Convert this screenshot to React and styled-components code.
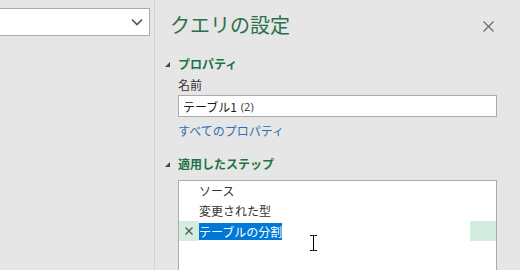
import React from "react";
import styled, { createGlobalStyle } from "styled-components";

const Global = createGlobalStyle`
  html, body { margin: 0; padding: 0; background: #e6e6e6; overflow: hidden; }
  body { font-family: "Noto Sans CJK JP", "Noto Sans", sans-serif; font-size: 12px; color: #262626; }
`;

const Page = styled.div`
  display: flex;
  width: 520px;
  height: 270px;
  background: #e6e6e6;
  overflow: hidden;
`;

const LeftPanel = styled.div`
  width: 154px;
  padding-top: 8px;
  box-sizing: border-box;
`;

const Dropdown = styled.div`
  margin-left: -1px;
  width: 151px;
  height: 28px;
  box-sizing: border-box;
  background: #fff;
  border: 1px solid #ababab;
  display: flex;
  align-items: center;
  justify-content: flex-end;
  padding-right: 6px;
`;

const Divider = styled.div`
  width: 1px;
  background: #d2d2d2;
`;

const RightPanel = styled.div`
  flex: 1;
  display: flex;
  flex-direction: column;
  padding: 0 23px 0 10px;
  position: relative;
`;

const TitleRow = styled.div`
  display: flex;
  align-items: center;
  justify-content: space-between;
  padding: 11px 3px 0 5px;
  height: 28px;
`;

const Title = styled.div`
  font-size: 20px;
  line-height: 28px;
  color: #2b7149;
`;

const CloseButton = styled.div`
  width: 11px;
  height: 11px;
  display: flex;
  margin-top: 2px;
`;

const SectionHeader = styled.div`
  display: flex;
  align-items: center;
  height: 18px;
  margin-top: ${(p) => p.$top}px;
`;

const Caret = styled.div`
  width: 13px;
  display: flex;
  align-items: center;
`;

const SectionTitle = styled.div`
  font-weight: 700;
  font-size: 12px;
  line-height: 18px;
  color: #217346;
`;

const Content = styled.div`
  padding-left: 13px;
  display: flex;
  flex-direction: column;
`;

const Label = styled.div`
  line-height: 18px;
  margin-top: 3px;
  color: #333;
`;

const NameInput = styled.div`
  margin-top: 1px;
  height: 22px;
  box-sizing: border-box;
  border: 1px solid #ababab;
  background: #fff;
  padding-left: 4px;
  display: flex;
  align-items: center;
  color: #1a1a1a;
`;

const Paren = styled.span`
  font-family: "Noto Sans", sans-serif;
  font-size: 11px;
  color: #444;
  margin-left: 1px;
`;

const Link = styled.div`
  line-height: 18px;
  margin-top: 5px;
  color: #2f6db5;
`;

const StepList = styled.div`
  margin-top: 7px;
  height: 120px;
  box-sizing: border-box;
  border: 1px solid #ababab;
  background: #fff;
  display: flex;
  flex-direction: column;
`;

const Step = styled.div`
  height: 20px;
  display: flex;
  align-items: center;
  background: ${(p) => (p.$active ? "#d3ede0" : "transparent")};
`;

const StepIcon = styled.div`
  width: 20px;
  height: 20px;
  display: flex;
  align-items: center;
  justify-content: center;
`;

const StepText = styled.div`
  line-height: 20px;
  color: #333;
`;

const EditBox = styled.div`
  width: 271px;
  height: 20px;
  background: #fff;
  display: flex;
  align-items: center;
`;

const Selected = styled.span`
  background: #0078d7;
  color: #fff;
  line-height: 17px;
  height: 17px;
`;

const Cursor = styled.div`
  position: absolute;
  left: 155px;
  top: 235px;
  width: 7px;
  height: 16px;
`;

export default function App() {
  return (
    <Page>
      <Global />
      <LeftPanel>
        <Dropdown>
          <svg width="12" height="8" viewBox="0 0 12 8">
            <path d="M1 1.5 L6 6.5 L11 1.5" fill="none" stroke="#555" strokeWidth="1.6" />
          </svg>
        </Dropdown>
      </LeftPanel>
      <Divider />
      <RightPanel>
        <TitleRow>
          <Title>クエリの設定</Title>
          <CloseButton>
            <svg width="11" height="11" viewBox="0 0 11 11">
              <path d="M0.5 0.5 L10.5 10.5 M10.5 0.5 L0.5 10.5" stroke="#666" strokeWidth="1.1" />
            </svg>
          </CloseButton>
        </TitleRow>
        <SectionHeader $top={16}>
          <Caret>
            <svg width="5" height="5" viewBox="0 0 5 5">
              <path d="M5 0 L5 5 L0 5 Z" fill="#444" />
            </svg>
          </Caret>
          <SectionTitle>プロパティ</SectionTitle>
        </SectionHeader>
        <Content>
          <Label>名前</Label>
          <NameInput>
            テーブル1<Paren>&nbsp;(2)</Paren>
          </NameInput>
          <Link>すべてのプロパティ</Link>
        </Content>
        <SectionHeader $top={15}>
          <Caret>
            <svg width="5" height="5" viewBox="0 0 5 5">
              <path d="M5 0 L5 5 L0 5 Z" fill="#444" />
            </svg>
          </Caret>
          <SectionTitle>適用したステップ</SectionTitle>
        </SectionHeader>
        <Content>
          <StepList>
            <Step>
              <StepIcon />
              <StepText>ソース</StepText>
            </Step>
            <Step>
              <StepIcon />
              <StepText>変更された型</StepText>
            </Step>
            <Step $active>
              <StepIcon>
                <svg width="8" height="8" viewBox="0 0 8 8">
                  <path d="M0.5 0.5 L7.5 7.5 M7.5 0.5 L0.5 7.5" stroke="#555" strokeWidth="1.3" />
                </svg>
              </StepIcon>
              <EditBox>
                <Selected>テーブルの分割</Selected>
              </EditBox>
            </Step>
          </StepList>
        </Content>
        <Cursor>
          <svg width="7" height="16" viewBox="0 0 7 16">
            <path d="M0 0.5 H2.5 M4.5 0.5 H7 M3.5 1 V15 M0 15.5 H2.5 M4.5 15.5 H7 M2.5 0.5 H4.5 M2.5 15.5 H4.5" stroke="#000" strokeWidth="1" fill="none" />
          </svg>
        </Cursor>
      </RightPanel>
    </Page>
  );
}
